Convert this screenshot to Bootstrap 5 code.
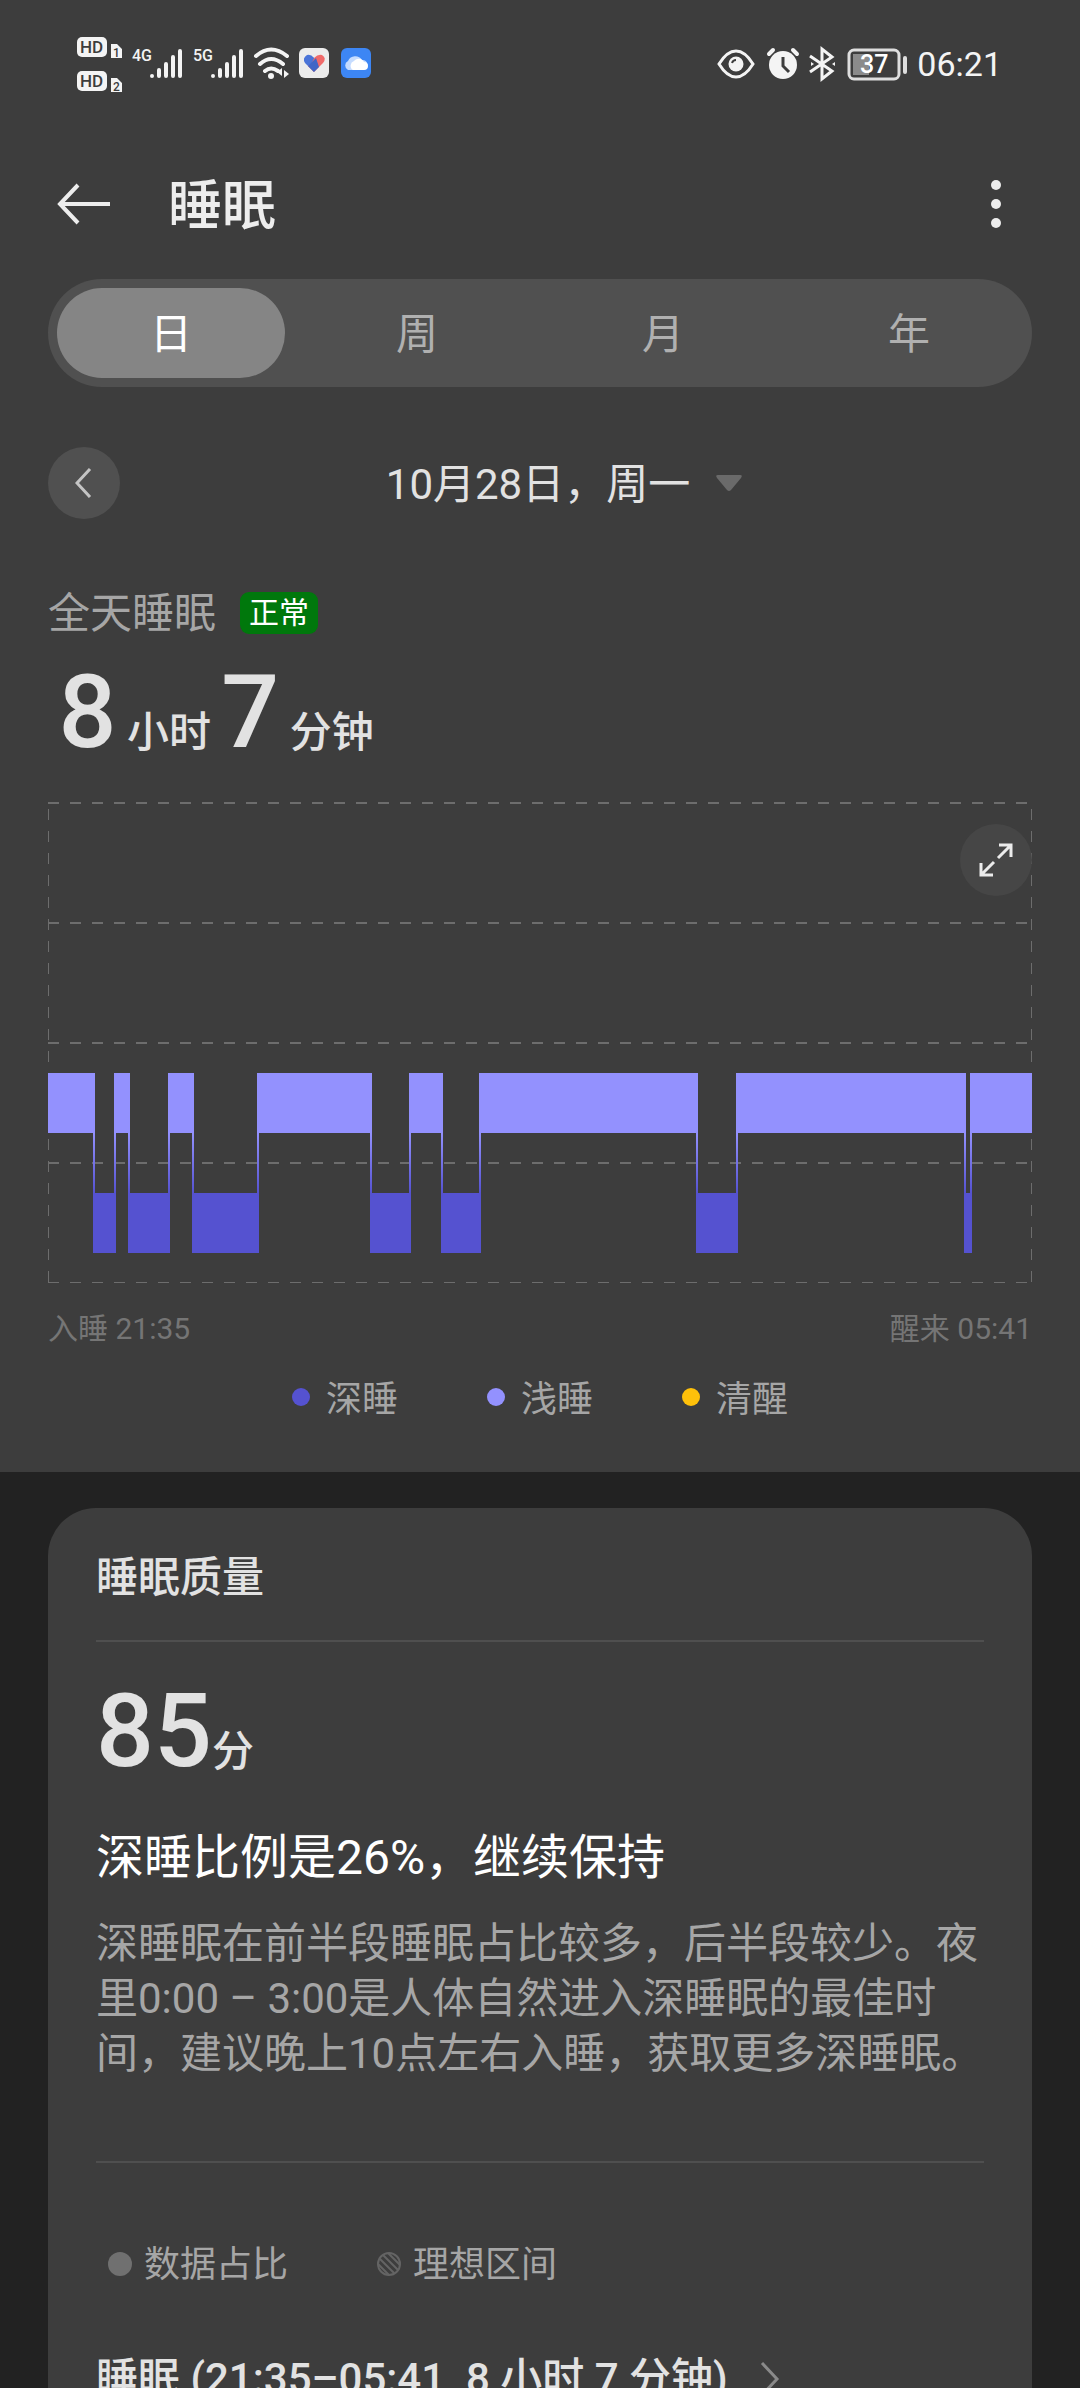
<!DOCTYPE html>
<html lang="zh-CN">
<head>
<meta charset="utf-8">
<meta name="viewport" content="width=device-width, initial-scale=1">
<title>睡眠</title>
<link href="https://cdn.jsdelivr.net/npm/bootstrap@5.3.0/dist/css/bootstrap.min.css" rel="stylesheet">
<style>
  :root { --panel: #3d3d3d; --raised: #505050; --bright: #e2e2e2; --muted: #a6a6a6; --deep: #5552d0; --shallow: #9391fe; --awake: #ffc10a; }
  body { background: #222; color: var(--bright); font-family: Roboto, "Noto Sans CJK SC", sans-serif; font-size: 42px; line-height: 56px; }
  .panel { background: var(--panel); }
  .gutter { padding-left: 48px; padding-right: 48px; }
  .status-bar { height: 132px; padding: 0 78px 4px 76px; color: #f4f4f4; }
  .status-bar time { font-size: 34px; line-height: 40px; margin-left: 8px; }
  .title-bar { height: 144px; padding: 0 57px; gap: 57px; }
  .title-bar h1 { font-size: 54px; line-height: 72px; font-weight: 500; color: #ededed; padding-top: 6px; }
  .tab-strip { background: var(--raised); border-radius: 54px; margin: 3px 48px 0; }
  .tab-strip .nav-item { padding: 9px; }
  .tab-strip .nav-link { background: transparent; color: #b0b0b0; border-radius: 45px; height: 90px; padding: 4px 0 0; line-height: 86px; }
  .tab-strip .nav-link.active { background: #858585; color: #fff; }
  .date-row { padding-top: 60px; }
  .round-btn { width: 72px; height: 72px; background: var(--raised); }
  .date-pick { gap: 26px; font-size: 42px; line-height: 56px; color: var(--bright); }
  .date-pick span { padding-top: 4px; }
  .summary { padding-top: 64px; }
  .caption-text { color: var(--muted); padding-top: 3px; }
  .state-tag { background: #00780c; color: #fff; font-size: 30px; line-height: 42px; border-radius: 9px; padding: 0 9px; }
  .figure { font-size: 102px; line-height: 102px; font-weight: 500; }
  .unit { font-weight: 500; }
  .duration { white-space: pre; margin-top: 19px; }
  .chart-box { margin-top: 39px; }
  .expand-btn { top: 22px; right: 0; background: #464646; }
  .axis-row { font-size: 30px; line-height: 40px; color: #757575; padding-top: 26px; }
  .legend-row { gap: 89px; font-size: 36px; line-height: 48px; color: var(--muted); padding: 27px 0 48px; }
  .dot { width: 18px; height: 18px; border-radius: 50%; margin-bottom: 6px; }
  .dot-deep { background: var(--deep); }
  .dot-shallow { background: var(--shallow); }
  .dot-awake { background: var(--awake); }
  .quality { background: var(--panel); border-radius: 48px 48px 0 0; margin: 36px 48px 0; padding: 0 48px; }
  .quality h2 { font-size: 42px; line-height: 56px; font-weight: 500; padding: 42px 0 34px; }
  .quality h3 { font-size: 48px; line-height: 64px; font-weight: 400; color: #fff; margin-top: 44px; }
  .rule { border-top: 2px solid #4f4f4f; }
  .advice { color: var(--muted); line-height: 55px; margin: 26px 0 80px; }
  .score { margin-top: 38px; }
  .range-key { padding: 78px 0 0 12px; gap: 89px; font-size: 36px; line-height: 48px; color: var(--muted); }
  .range-key svg { margin-bottom: 3px; }
  .detail-link { color: var(--bright); font-weight: 500; padding-top: 62px; gap: 32px; white-space: pre; }
</style>
</head>
<body class="vh-100 overflow-hidden">
<div class="panel">
  <header>
    <div class="status-bar d-flex align-items-center justify-content-between">
      <svg width="300" height="60" viewBox="0 0 300 60" fill="#f4f4f4" role="img" aria-label="信号状态">
        <g font-family="Roboto, sans-serif" font-weight="500">
          <rect x="1" y="3" width="30" height="20" rx="5"/><rect x="1" y="37" width="30" height="20" rx="5"/>
          <text x="4" y="19" font-size="17" fill="#3d3d3d">HD</text><text x="4" y="53" font-size="17" fill="#3d3d3d">HD</text>
          <path d="M35 10h6l5 5v9H35zM35 44h6l5 5v9H35z"/>
          <text x="37" y="23" font-size="12" fill="#3d3d3d">1</text><text x="37" y="57" font-size="12" fill="#3d3d3d">2</text>
          <text x="56" y="27" font-size="16">4G</text><text x="117" y="27" font-size="16">5G</text>
        </g>
        <g stroke="#f4f4f4" stroke-width="4" stroke-linecap="round" fill="none">
          <path d="M76 42v0M83 36v6M90 30v12M97 23v19M104 17v25"/>
          <path d="M137 42v0M144 36v6M151 30v12M158 23v19M165 17v25"/>
          <path d="M180 22q15-13 31 0M184 30q11-10 23 0M189 37q6-5 13 0"/>
        </g>
        <circle cx="195" cy="42" r="3"/><path d="M206 34v8l-5-4zM208 36l5 4-5 4z"/>
        <rect x="223" y="14" width="30" height="30" rx="6" fill="#ececec"/>
        <path d="M238 38l-9-9q-3-5 2-8 4-1 7 3z" fill="#4a74d8"/><path d="M238 38l9-9q4-5-1-8-4-1-8 3l-6 8z" fill="#f06a6a"/><path d="M229 28l6-6 3 2-4 9z" fill="#4a74d8"/><path d="M238 38l-6-6 8-8 3 9z" fill="#4166c6"/>
        <rect x="265" y="14" width="30" height="30" rx="6" fill="#3d86f4"/>
        <path d="M272 36a5 5 0 0 1 0-9 8 8 0 0 1 14-1 5 5 0 0 1 1 10z" fill="#c5dcff"/><path d="M277 36a5 5 0 0 1 1-9 6 6 0 0 1 10 1 4 4 0 0 1 0 8z" fill="#fff"/>
      </svg>
      <div class="d-flex align-items-center">
        <svg width="192" height="40" viewBox="0 0 192 40" fill="none" stroke="#f4f4f4" role="img" aria-label="电量 37%">
          <path d="M2 20Q10 7 19 7t17 13Q28 33 19 33T2 20z" stroke-width="3"/><circle cx="19" cy="20" r="7.500" fill="#f4f4f4" stroke="none"/><path d="M15 19q1-3 4-3" stroke="#3d3d3d" stroke-width="2"/>
          <circle cx="66" cy="21" r="14" fill="#f4f4f4" stroke="none"/><path d="M66 13v9l6 6" stroke="#3d3d3d" stroke-width="3"/><path d="M52 10l4-4M80 10l-4-4" stroke-width="4" stroke-linecap="round"/>
          <path d="M93 12l22 15-10 8V5l10 8-22 15" stroke-width="3"/><path d="M94 18v4l3-2zM118 18v4l-3-2z" fill="#f4f4f4" stroke="none"/>
          <rect x="132" y="6" width="50" height="29" rx="5" stroke="#dedede" stroke-width="3"/><rect x="136" y="10" width="16" height="21" fill="#8b8b8b" stroke="none"/>
          <path d="M188 14v14" stroke="#dedede" stroke-width="4" stroke-linecap="round"/>
          <text x="143" y="29" font-family="Roboto, sans-serif" font-size="25" font-weight="500" fill="#fff" stroke="none">37</text>
        </svg>
        <time datetime="06:21">06:21</time>
      </div>
    </div>
    <div class="title-bar d-flex align-items-center">
      <button type="button" class="btn border-0 p-0 d-flex" aria-label="返回">
        <svg width="54" height="44" viewBox="0 0 54 44" fill="none" stroke="#ededed" stroke-width="4"><path d="M53 22H4M21 3L3 22l18 19"/></svg>
      </button>
      <h1 class="mb-0 me-auto">睡眠</h1>
      <button type="button" class="btn border-0 p-0 d-flex" aria-label="更多">
        <svg width="54" height="48" viewBox="0 0 54 48" fill="#ededed"><circle cx="27" cy="5" r="5"/><circle cx="27" cy="24" r="5"/><circle cx="27" cy="43" r="5"/></svg>
      </button>
    </div>
  </header>
  <ul class="nav nav-justified tab-strip">
    <li class="nav-item"><button type="button" class="nav-link border-0 active" aria-current="true">日</button></li>
    <li class="nav-item"><button type="button" class="nav-link border-0">周</button></li>
    <li class="nav-item"><button type="button" class="nav-link border-0">月</button></li>
    <li class="nav-item"><button type="button" class="nav-link border-0">年</button></li>
  </ul>
  <div class="date-row gutter d-flex align-items-center">
    <button type="button" class="btn round-btn rounded-circle border-0 p-0 d-flex align-items-center justify-content-center" aria-label="前一天">
      <svg width="18" height="30" viewBox="0 0 18 30" fill="none" stroke="#c4c4c4" stroke-width="3"><path d="M15 1L2 15l13 14"/></svg>
    </button>
    <div class="flex-grow-1 d-flex justify-content-center pe-3">
      <button type="button" class="btn date-pick border-0 p-0 pe-2 d-flex align-items-center">
        <span>10月28日，周一</span>
        <svg width="26" height="17" viewBox="0 0 26 17" fill="#6a6a6a"><path d="M2 0h22q3 0 1 3L15 15q-2 2-4 0L1 3q-2-3 1-3z"/></svg>
      </button>
    </div>
  </div>
  <section class="summary gutter">
    <div class="d-flex align-items-center">
      <span class="caption-text me-4">全天睡眠</span>
      <span class="state-tag">正常</span>
    </div>
    <div class="duration unit"> <span class="figure">8</span> 小时 <span class="figure">7</span> 分钟</div>
    <div class="chart-box position-relative">
      <svg class="d-block w-100" height="481" viewBox="0 0 984 481" preserveAspectRatio="none" role="img" aria-label="睡眠阶段图">
        <defs><linearGradient id="fade" x2="0" y2="1"><stop stop-color="#9391fe"/><stop offset="1" stop-color="#5552d0"/></linearGradient></defs>
        <g stroke="#6d6d6d" stroke-dasharray="11 11" fill="none">
          <path stroke-width="2" d="M0 1H984M0 121H984M0 241H984M0 361H984"/>
          <path stroke-width="1" d="M0 480.500H984M.5 480V0M983.500 480V0"/>
        </g>
        <path fill="url(#fade)" d="M45 331h2v60h-2zM66 331h2v60h-2zM80 331h2v60h-2zM120 331h2v60h-2zM144 331h2v60h-2zM209 331h2v60h-2zM322 331h2v60h-2zM361 331h2v60h-2zM393 331h2v60h-2zM431 331h2v60h-2zM648 331h2v60h-2zM688 331h2v60h-2zM916 331h2v60h-2zM922 331h2v60h-2z"/>
        <path fill="#9391fe" d="M0 271h47v60H0zM66 271h16v60H66zM120 271h26v60h-26zM209 271h115v60H209zM361 271h34v60h-34zM431 271h219v60H431zM688 271h230v60H688zM922 271h62v60h-62z"/>
        <path fill="#5552d0" d="M45 391h23v60H45zM80 391h42v60H80zM144 391h67v60h-67zM322 391h41v60h-41zM393 391h40v60h-40zM648 391h42v60h-42zM916 391h8v60h-8z"/>
      </svg>
      <button type="button" class="btn round-btn expand-btn position-absolute rounded-circle border-0 p-0 d-flex align-items-center justify-content-center" aria-label="全屏">
        <svg width="36" height="36" viewBox="0 0 36 36" fill="none" stroke="#ebebeb" stroke-width="3"><path d="M21 3h12v12M33 3L20 16M3 21v12h12M3 33l13-13"/></svg>
      </button>
    </div>
    <div class="axis-row d-flex justify-content-between"><span>入睡 21:35</span><span>醒来 05:41</span></div>
    <div class="legend-row d-flex justify-content-center">
      <span class="d-flex align-items-center gap-3"><i class="dot dot-deep"></i>深睡</span>
      <span class="d-flex align-items-center gap-3"><i class="dot dot-shallow"></i>浅睡</span>
      <span class="d-flex align-items-center gap-3"><i class="dot dot-awake"></i>清醒</span>
    </div>
  </section>
</div>
<section class="quality">
  <h2 class="mb-0">睡眠质量</h2>
  <div class="rule"></div>
  <div class="score unit"><span class="figure">85</span>分</div>
  <h3 class="mb-0">深睡比例是26%，继续保持</h3>
  <p class="advice">深睡眠在前半段睡眠占比较多，后半段较少。夜里0:00 – 3:00是人体自然进入深睡眠的最佳时间，建议晚上10点左右入睡，获取更多深睡眠。</p>
  <div class="rule"></div>
  <div class="range-key d-flex">
    <span class="d-flex align-items-center"><svg class="me-2" width="28" height="24" viewBox="0 0 28 24"><circle cx="12" cy="12" r="12" fill="#707070"/></svg>数据占比</span>
    <span class="d-flex align-items-center"><svg class="me-2" width="28" height="24" viewBox="0 0 28 24" fill="none" stroke="#646464" stroke-width="2"><circle cx="12" cy="12" r="11"/><path d="M11 1l12 12M6 3l15 15M3 7l14 14M1 12l11 11"/></svg>理想区间</span>
  </div>
  <a href="#" class="detail-link text-decoration-none d-flex align-items-center"><span>睡眠 (21:35–05:41  8 小时 7 分钟)</span><svg width="20" height="34" viewBox="0 0 20 34" fill="none" stroke="#8a8a8a" stroke-width="3"><path d="M2 1l15 16L2 33"/></svg></a>
</section>
<script src="https://cdn.jsdelivr.net/npm/bootstrap@5.3.0/dist/js/bootstrap.bundle.min.js"></script>
</body>
</html>
